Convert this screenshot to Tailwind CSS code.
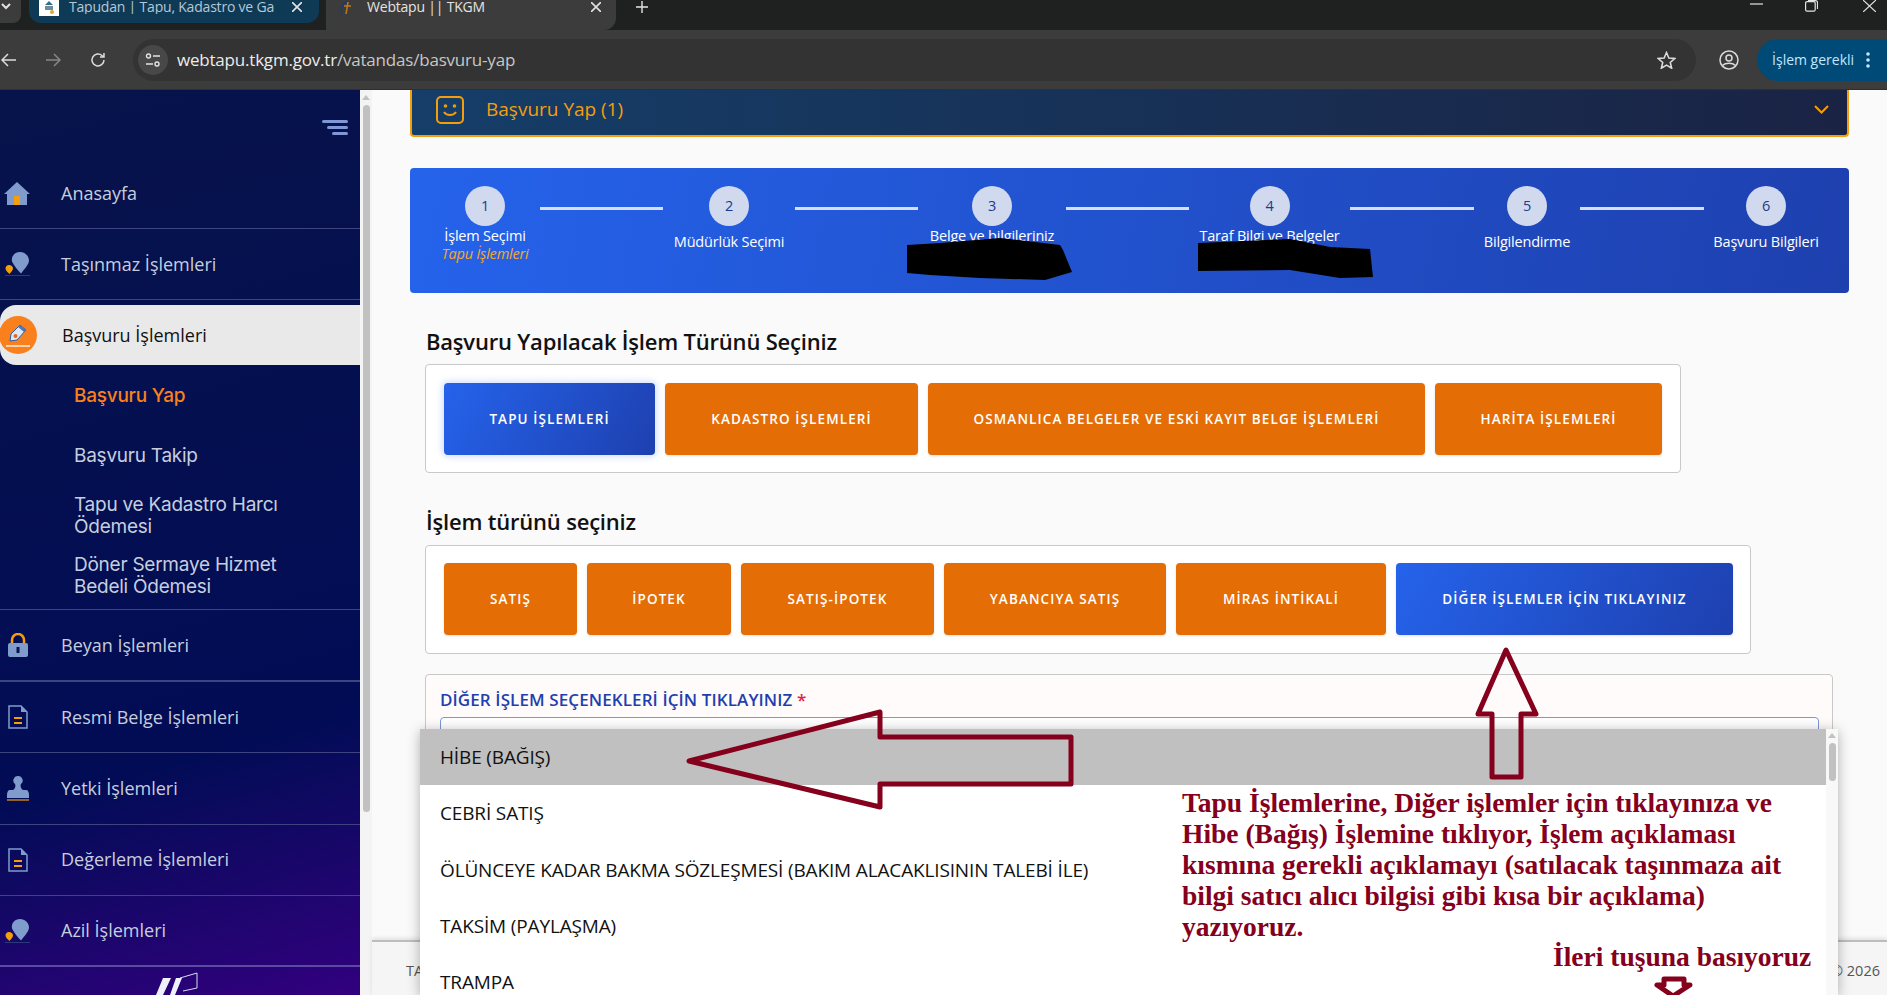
<!DOCTYPE html>
<html lang="tr">
<head>
  <meta charset="UTF-8"/>
  <title>Webtapu || TKGM</title>
  <script src="https://cdn.jsdelivr.net/npm/@tailwindcss/browser@4"></script>
</head>
<body class="bg-[#fafafa] font-['Open_Sans',sans-serif]">
<div class="relative w-[1887px] h-[995px] overflow-hidden flex flex-col">

  <!-- browser tabs -->
  <div class="h-[30px] bg-[#1f2020] flex shrink-0 overflow-hidden text-[14px] tracking-[-0.2px] leading-[14px]">
    <div class="w-[21px] h-[23px] bg-[#3c3c3c] rounded-br-lg flex items-start pl-[1px] pt-[3px]">
      <svg width="10" height="8" viewBox="0 0 10 8" fill="none" stroke="#e3e3e3" stroke-width="2"><path d="M1 1l4 4 4-4"/></svg>
    </div>
    <div class="ml-2 w-[290px] h-[23px] bg-[#0f3a56] rounded-b-xl flex items-start text-[#b5c8d6]">
      <div class="ml-[10px] w-[20px] h-[16px] bg-white flex justify-center">
        <svg width="14" height="15" viewBox="0 0 14 15"><path d="M7 1l4 4H3z" fill="#2f6f8f"/><rect x="3" y="6" width="8" height="4" fill="#6b8e9f"/><circle cx="10" cy="12" r="2" fill="#e8a33c"/></svg>
      </div>
      <span class="ml-[10px] w-[210px] overflow-hidden whitespace-nowrap">Tapudan | Tapu, Kadastro ve Ga</span>
      <svg class="ml-[13px] mt-[2px]" width="10" height="10" viewBox="0 0 10 10" stroke="#e3e3e3" stroke-width="1.6"><path d="M0 0l10 10M10 0L0 10"/></svg>
    </div>
    <div class="ml-[7px] w-[290px] h-[30px] bg-[#3c3c3c] rounded-br-xl flex items-start text-[#e3e3e3]">
      <svg class="ml-[13px]" width="14" height="16" viewBox="0 0 14 16" fill="none"><path d="M3 15C1 10 3 3 9 1" stroke="#1e3a6e" stroke-width="1.5"/><path d="M7 14L9 2M5 6h7" stroke="#c27a1a" stroke-width="1.5"/></svg>
      <span class="ml-[14px] w-[114px] whitespace-nowrap">Webtapu || TKGM</span>
      <svg class="ml-[110px] mt-[2px]" width="10" height="10" viewBox="0 0 10 10" stroke="#e3e3e3" stroke-width="1.6"><path d="M0 0l10 10M10 0L0 10"/></svg>
    </div>
    <svg class="ml-[20px] mt-[1px]" width="12" height="12" viewBox="0 0 12 12" stroke="#e3e3e3" stroke-width="1.4"><path d="M6 0v12M0 6h12"/></svg>
    <div class="ml-auto flex items-start text-white">
      <svg class="mt-[3px]" width="13" height="2" viewBox="0 0 13 2" stroke="#e3e3e3" stroke-width="1.2"><path d="M0 1h13"/></svg>
      <svg class="ml-[42px]" width="13" height="12" viewBox="0 0 13 12" fill="none" stroke="#e3e3e3" stroke-width="1.2"><rect x="0.6" y="1.6" width="9.6" height="9.6" rx="1.5"/><path d="M3 0.6h7.5a2 2 0 0 1 2 2V9"/></svg>
      <svg class="ml-[45px] mr-[11px]" width="13" height="12" viewBox="0 0 13 12" stroke="#e3e3e3" stroke-width="1.2"><path d="M0 0l13 12M13 0L0 12"/></svg>
    </div>
  </div>

  <!-- browser toolbar -->
  <div class="h-[60px] bg-[#3c3c3c] flex items-center shrink-0 border-b border-[#2a2f38]">
    <svg class="ml-[1px]" width="16" height="14" viewBox="0 0 16 14" fill="none" stroke="#dcdcdc" stroke-width="1.5"><path d="M15 7H1M7 1L1 7l6 6"/></svg>
    <svg class="ml-[29px]" width="16" height="14" viewBox="0 0 16 14" fill="none" stroke="#868686" stroke-width="1.5"><path d="M0 7h14M8 1l6 6-6 6"/></svg>
    <svg class="ml-[28px]" width="16" height="16" viewBox="0 0 16 16" fill="none" stroke="#dcdcdc" stroke-width="1.5"><path d="M14 8a6 6 0 1 1-2-4.5L14 5M14 1v4h-4"/></svg>
    <div class="ml-[27px] w-[1564px] h-[42px] bg-[#333333] rounded-full flex items-center">
      <div class="ml-[5px] w-[30px] h-[30px] rounded-full bg-[#484848] flex items-center justify-center">
        <svg width="16" height="14" viewBox="0 0 16 14" fill="none" stroke="#e3e3e3" stroke-width="1.4"><circle cx="3.5" cy="3" r="2"/><path d="M8 3h7M1 11h7"/><circle cx="12" cy="11" r="2"/></svg>
      </div>
      <div class="ml-[9px] mt-[1px] text-[17px] tracking-[-0.2px] text-[#c7c7c7] whitespace-nowrap"><span class="text-[#ececec]">webtapu.tkgm.gov.tr</span>/vatandas/basvuru-yap</div>
      <svg class="ml-auto mr-[20px]" width="19" height="18" viewBox="0 0 24 23" fill="none" stroke="#dcdcdc" stroke-width="2"><path d="M12 2l3 7 7.500 .6-5.700 5 1.800 7.400L12 18l-6.600 4 1.800-7.400-5.700-5L9 9z"/></svg>
    </div>
    <svg class="ml-[23px]" width="20" height="20" viewBox="0 0 20 20" fill="none" stroke="#dcdcdc" stroke-width="1.500"><circle cx="10" cy="10" r="9"/><circle cx="10" cy="8" r="3"/><path d="M3.500 15.500c3-3 10-3 13 0"/></svg>
    <div class="ml-[18px] w-[130px] h-[42px] bg-[#004a77] rounded-l-full rounded-r-[20px] flex items-center pl-[15px] text-[14px] text-[#c2e7ff] whitespace-nowrap">
      İşlem gerekli
      <svg class="ml-[12px]" width="4" height="16" viewBox="0 0 4 16" fill="#c2e7ff"><circle cx="2" cy="2" r="1.800"/><circle cx="2" cy="8" r="1.800"/><circle cx="2" cy="14" r="1.800"/></svg>
    </div>
  </div>

  <div class="flex flex-1 min-h-0">
    <!-- sidebar -->
    <aside class="relative w-[360px] shrink-0 bg-[linear-gradient(165deg,#07134a_0%,#020c56_72%,#32007f_100%)] text-[18px] font-medium text-[#c6cede] overflow-hidden">
      <div class="h-[68px] flex flex-col items-end gap-[3px] pr-[12px] pt-[30px]">
        <div class="w-[26px] h-[3px] bg-[#7f97d6] rounded"></div>
        <div class="w-[21px] h-[3px] bg-[#7f97d6] rounded"></div>
        <div class="w-[16px] h-[3px] bg-[#7f97d6] rounded"></div>
      </div>

      <div class="h-[71.3px] flex items-center border-b border-[#3d4480]">
        <svg class="ml-[4px] w-[26px]" height="23" viewBox="0 0 26 23"><path d="M13 0L26 12h-3v11H3V12H0z" fill="#7f9ccd"/><rect x="10" y="14" width="6" height="9" fill="#f59e0b"/></svg>
        <span class="ml-[31px]">Anasayfa</span>
      </div>
      <div class="h-[71.2px] flex items-center border-b border-[#3d4480]">
        <svg class="ml-[5px] w-[25px]" height="24" viewBox="0 0 25 24"><path d="M15 0c5 0 9 4 9 8.500 0 4-5 9-8 13-3-3-7-8-9-12C6 4 10 0 15 0z" fill="#7f9ccd"/><path d="M4 13c2 0 4 1.500 4 3.500 0 2-2.500 4-3.500 5.500C3 20.500 0.500 18.500 0.500 16.500 0.500 14.500 2 13 4 13z" fill="#f59e0b"/><path d="M0 23.500h25" stroke="#2b3a78"/></svg>
        <span class="ml-[31px]">Taşınmaz İşlemleri</span>
      </div>
      <div class="mt-[5px] h-[60px] bg-[#e9e9e9] rounded-l-2xl flex items-center text-[#101010]">
        <div class="-ml-[1px] w-[38px] h-[38px] rounded-full bg-[#f9801c] flex items-center justify-center">
          <svg width="26" height="26" viewBox="0 0 26 26" fill="none"><path d="M15 3l6 5-9 10-7 1 1-7z" fill="#dfe7f7" stroke="#2f5fa8"/><circle cx="10.500" cy="14" r="2" fill="#e8641b"/><path d="M15 3l6 5-2 2-6-5z" fill="#4d78b8"/><path d="M1 24h24" stroke="#fff" stroke-width="1.300"/></svg>
        </div>
        <span class="ml-[25px]">Başvuru İşlemleri</span>
      </div>
      <nav class="h-[245px] pt-[1px] pl-[74px] pr-[60px] font-['Inter',sans-serif] text-[19px] leading-[22px] tracking-[-0.25px] font-normal text-[#c6cede] border-b border-[#3d4480]">
        <div class="h-[60px] flex items-center text-[#f9801c] font-medium">Başvuru Yap</div>
        <div class="h-[60px] flex items-center">Başvuru Takip</div>
        <div class="h-[60px] flex items-center">Tapu ve Kadastro Harcı Ödemesi</div>
        <div class="h-[60px] flex items-center">Döner Sermaye Hizmet Bedeli Ödemesi</div>
      </nav>
      <div class="h-[71.5px] flex items-center border-b-2 border-[#3d4480]">
        <svg class="ml-[8px] w-[20px]" height="24" viewBox="0 0 20 24" fill="none"><path d="M4 11V7a6 6 0 0 1 12 0v4" stroke="#f59e0b" stroke-width="2.500"/><rect y="10" width="20" height="14" rx="2" fill="#7f9ccd"/><rect x="8.500" y="14" width="3" height="6" fill="#0b1450"/></svg>
        <span class="ml-[33px]">Beyan İşlemleri</span>
      </div>
      <div class="h-[71.3px] flex items-center border-b border-[#3d4480]">
        <svg class="ml-[8px] w-[20px]" height="24" viewBox="0 0 20 24" fill="none"><path d="M1 1h12l6 6v16H1z" stroke="#7f9ccd" stroke-width="1.500"/><path d="M13 1v6h6" fill="#7f9ccd"/><path d="M6 13h8M6 18h8" stroke="#f59e0b" stroke-width="2"/></svg>
        <span class="ml-[33px]">Resmi Belge İşlemleri</span>
      </div>
      <div class="h-[71.3px] flex items-center border-b border-[#3d4480]">
        <svg class="ml-[7px] w-[22px]" height="25" viewBox="0 0 22 25"><path d="M11 0a4.500 4.500 0 0 1 3 8c-1 2 0 5 2 6h3c2 0 3 2 3 5v3H0v-3c0-3 1-5 3-5h3c2-1 3-4 2-6a4.500 4.500 0 0 1 3-8z" fill="#7f9ccd"/><path d="M0 24h22" stroke="#f59e0b" stroke-width="1.200"/></svg>
        <span class="ml-[32px]">Yetki İşlemleri</span>
      </div>
      <div class="h-[71.3px] flex items-center border-b border-[#3d4480]">
        <svg class="ml-[8px] w-[20px]" height="24" viewBox="0 0 20 24" fill="none"><path d="M1 1h12l6 6v16H1z" stroke="#7f9ccd" stroke-width="1.500"/><path d="M13 1v6h6" fill="#7f9ccd"/><path d="M6 13h8M6 18h8" stroke="#f59e0b" stroke-width="2"/></svg>
        <span class="ml-[33px]">Değerleme İşlemleri</span>
      </div>
      <div class="h-[71.5px] flex items-center border-b-2 border-[#5a4aa0]">
        <svg class="ml-[5px] w-[25px]" height="24" viewBox="0 0 25 24"><path d="M15 0c5 0 9 4 9 8.500 0 4-5 9-8 13-3-3-7-8-9-12C6 4 10 0 15 0z" fill="#7f9ccd"/><path d="M4 13c2 0 4 1.500 4 3.500 0 2-2.500 4-3.500 5.500C3 20.500 0.500 18.500 0.500 16.500 0.500 14.500 2 13 4 13z" fill="#f59e0b"/><path d="M0 23.500h25" stroke="#2b3a78"/></svg>
        <span class="ml-[31px]">Azil İşlemleri</span>
      </div>
      <svg class="ml-[150px] mt-[5px]" width="48" height="23" viewBox="0 0 48 23" fill="none"><path d="M6 23L13 6h8L13 23zM20 23L26 6h6L25 23z" fill="#eef0fb"/><path d="M30 6l17-5v15l-14 3" stroke="#d9dcf2" stroke-width="1"/></svg>
    </aside>

    <!-- page scrollbar -->
    <div class="w-[12px] shrink-0 bg-[#f4f4f4] flex flex-col items-center pt-[5px]">
      <div class="w-0 h-0 border-x-[4px] border-x-transparent border-b-[5px] border-b-[#c1c1c1]"></div>
      <div class="mt-[5px] w-[7px] h-[707px] rounded-full bg-[#c1c1c1]"></div>
    </div>

    <!-- page -->
    <main class="relative flex-1 min-w-0 flex flex-col">
      <div class="flex-1 min-h-0 px-[38px] overflow-hidden">
        <div class="h-[47px] pb-[6px] border-x-2 border-b-2 border-[#f59e0b] rounded-b bg-[linear-gradient(90deg,#153e68,#1a2344)] flex items-center text-[#f59e0b]">
          <svg class="ml-[24px]" width="28" height="28" viewBox="0 0 28 28" fill="none" stroke="#f59e0b" stroke-width="2"><rect x="1" y="1" width="26" height="26" rx="4"/><circle cx="9.500" cy="10" r="0.800"/><circle cx="18.500" cy="10" r="0.800"/><path d="M8 16c2.500 4 9.500 4 12 0"/></svg>
          <span class="ml-[22px] text-[19px] font-medium">Başvuru Yap (1)</span>
          <svg class="ml-auto mr-[18px]" width="15" height="9" viewBox="0 0 15 9" fill="none" stroke="#f59e0b" stroke-width="2"><path d="M1 1l6.500 6.500L14 1"/></svg>
        </div>

        <!-- steps -->
        <div class="mt-[31px] h-[125px] rounded bg-[linear-gradient(100deg,#2563eb,#1e40af)] flex pl-[20px] pt-[18px] text-[14.5px] leading-[18px] tracking-[-0.2px] text-white">
          <div class="w-[110px] flex flex-col items-center">
            <div class="w-[40px] h-[40px] rounded-full bg-[#d0d9ee] text-[#1e3a8a] flex items-center justify-center">1</div>
            <div class="mt-[1px]">İşlem Seçimi</div>
            <div class="italic text-[#f9a826]">Tapu İşlemleri</div>
          </div>
          <div class="w-[123px] h-[3px] mt-[21px] bg-[#d6def2]"></div>
          <div class="w-[132px] flex flex-col items-center">
            <div class="w-[40px] h-[40px] rounded-full bg-[#d0d9ee] text-[#1e3a8a] flex items-center justify-center">2</div>
            <div class="mt-[7px]">Müdürlük Seçimi</div>
          </div>
          <div class="w-[123px] h-[3px] mt-[21px] bg-[#d6def2]"></div>
          <div class="w-[148px] flex flex-col items-center">
            <div class="w-[40px] h-[40px] rounded-full bg-[#d0d9ee] text-[#1e3a8a] flex items-center justify-center">3</div>
            <div class="mt-[1px]">Belge ve bilgileriniz</div>
          </div>
          <div class="w-[123px] h-[3px] mt-[21px] bg-[#d6def2]"></div>
          <div class="w-[161px] flex flex-col items-center">
            <div class="w-[40px] h-[40px] rounded-full bg-[#d0d9ee] text-[#1e3a8a] flex items-center justify-center">4</div>
            <div class="mt-[1px]">Taraf Bilgi ve Belgeler</div>
          </div>
          <div class="w-[124px] h-[3px] mt-[21px] bg-[#d6def2]"></div>
          <div class="w-[106px] flex flex-col items-center">
            <div class="w-[40px] h-[40px] rounded-full bg-[#d0d9ee] text-[#1e3a8a] flex items-center justify-center">5</div>
            <div class="mt-[7px]">Bilgilendirme</div>
          </div>
          <div class="w-[124px] h-[3px] mt-[21px] bg-[#d6def2]"></div>
          <div class="w-[124px] flex flex-col items-center">
            <div class="w-[40px] h-[40px] rounded-full bg-[#d0d9ee] text-[#1e3a8a] flex items-center justify-center">6</div>
            <div class="mt-[7px]">Başvuru Bilgileri</div>
          </div>
        </div>

        <h2 class="mt-[33px] ml-[16px] h-[30px] leading-[30px] text-[22px] tracking-[-0.2px] font-semibold text-[#111]">Başvuru Yapılacak İşlem Türünü Seçiniz</h2>
        <div class="mt-[8px] ml-[15px] w-[1256px] h-[109px] bg-white border border-[#c9c9c9] rounded flex gap-[10px] pl-[18px] pt-[18px] text-[13.5px] font-semibold tracking-[1.1px] text-white">
          <div class="w-[211px] h-[72px] rounded bg-[linear-gradient(120deg,#2563eb,#1e40af)] shadow-[0_0_6px_2px_rgba(37,99,235,0.2)] flex items-center justify-center">TAPU İŞLEMLERİ</div>
          <div class="w-[253px] h-[72px] rounded bg-[#e56d05] shadow flex items-center justify-center">KADASTRO İŞLEMLERİ</div>
          <div class="w-[497px] h-[72px] rounded bg-[#e56d05] shadow flex items-center justify-center">OSMANLICA BELGELER VE ESKİ KAYIT BELGE İŞLEMLERİ</div>
          <div class="w-[227px] h-[72px] rounded bg-[#e56d05] shadow flex items-center justify-center">HARİTA İŞLEMLERİ</div>
        </div>

        <h2 class="mt-[33px] ml-[16px] h-[30px] leading-[30px] text-[22px] tracking-[-0.2px] font-semibold text-[#111]">İşlem türünü seçiniz</h2>
        <div class="mt-[9px] ml-[15px] w-[1326px] h-[109px] bg-white border border-[#c9c9c9] rounded flex gap-[10px] pl-[18px] pt-[17px] text-[13.5px] font-semibold tracking-[1.1px] text-white">
          <div class="w-[133px] h-[72px] rounded bg-[#e56d05] shadow flex items-center justify-center">SATIŞ</div>
          <div class="w-[144px] h-[72px] rounded bg-[#e56d05] shadow flex items-center justify-center">İPOTEK</div>
          <div class="w-[193px] h-[72px] rounded bg-[#e56d05] shadow flex items-center justify-center">SATIŞ-İPOTEK</div>
          <div class="w-[222px] h-[72px] rounded bg-[#e56d05] shadow flex items-center justify-center">YABANCIYA SATIŞ</div>
          <div class="w-[210px] h-[72px] rounded bg-[#e56d05] shadow flex items-center justify-center">MİRAS İNTİKALİ</div>
          <div class="w-[337px] h-[72px] rounded bg-[linear-gradient(120deg,#2563eb,#1e40af)] shadow flex items-center justify-center">DİĞER İŞLEMLER İÇİN TIKLAYINIZ</div>
        </div>

        <div class="mt-[20px] ml-[15px] w-[1408px] h-[300px] bg-[#fffbfa] border border-[#c9c9c9] rounded pl-[14px] pr-[13px] pt-[14px]">
          <div class="h-[22px] leading-[22px] text-[17px] font-semibold tracking-[0.1px] text-[#1e40af]">DİĞER İŞLEM SEÇENEKLERİ İÇİN TIKLAYINIZ <span class="text-[#e11d48]">*</span></div>
          <div class="mt-[6px] h-[50px] bg-white border border-[#7f97d6] rounded"></div>
        </div>
      </div>

      <footer class="h-[55px] shrink-0 pt-[5px] bg-[#f5f5f5] border-t-2 border-[#bdbdbd] shadow-[0_-2px_4px_rgba(0,0,0,0.1)] flex items-center justify-between pl-[34px] pr-[7px] text-[14.5px] text-[#555]">
        <span>TA</span><span>© 2026</span>
      </footer>

      <!-- open select dropdown -->
      <div class="absolute left-[48px] top-[639px] w-[1418px] bottom-0 bg-white shadow-[0_2px_12px_rgba(0,0,0,0.3)] flex">
        <ul class="flex-1 text-[19px] tracking-[-0.15px] text-[#111]">
          <li class="h-[56px] bg-[#c0c0c0] flex items-center pl-[20px]">HİBE (BAĞIŞ)</li>
          <li class="h-[56.500px] flex items-center pl-[20px]">CEBRİ SATIŞ</li>
          <li class="h-[56.500px] flex items-center pl-[20px]">ÖLÜNCEYE KADAR BAKMA SÖZLEŞMESİ (BAKIM ALACAKLISININ TALEBİ İLE)</li>
          <li class="h-[56px] flex items-center pl-[20px]">TAKSİM (PAYLAŞMA)</li>
          <li class="h-[56px] flex items-center pl-[20px]">TRAMPA</li>
        </ul>
        <div class="w-[12px] bg-[#f8f8f8] flex flex-col items-center pt-[4px]">
          <div class="w-0 h-0 border-x-[4px] border-x-transparent border-b-[5px] border-b-[#c1c1c1]"></div>
          <div class="mt-[5px] w-[7px] h-[38px] rounded-full bg-[#c1c1c1]"></div>
        </div>
      </div>
    </main>
  </div>

  <!-- annotations drawn over the screenshot -->
  <svg class="absolute inset-0 pointer-events-none" width="1887" height="995" viewBox="0 0 1887 995" fill="none">
    <polygon points="907,245 940,243 1000,238 1060,245 1063,250 1072,272 1045,280 980,278 930,275 907,273" fill="#000"/>
    <polygon points="1198,243 1290,239 1330,247 1370,249 1373,277 1340,278 1290,270 1198,271" fill="#000"/>
    <polygon points="689,761 880,712 880,737 1071,737 1071,784 880,784 880,807" stroke="#85001c" stroke-width="5" stroke-linejoin="round"/>
    <polygon points="1506,650 1536,714 1521,714 1521,777 1492,777 1492,714 1478,714" stroke="#85001c" stroke-width="5" stroke-linejoin="round"/>
    <polygon points="1664,979 1684,979 1684,985 1690,985 1673,996 1657,985 1664,985" fill="#fff" stroke="#85001c" stroke-width="5" stroke-linejoin="round"/>
  </svg>
  <div class="absolute left-[1182px] top-[787px] w-[612px] font-['Liberation_Serif',serif] font-bold text-[27.5px] leading-[31px] text-[#85001c]">Tapu İşlemlerine, Diğer işlemler için tıklayınıza ve Hibe (Bağış) İşlemine tıklıyor, İşlem açıklaması kısmına gerekli açıklamayı (satılacak taşınmaza ait bilgi satıcı alıcı bilgisi gibi kısa bir açıklama) yazıyoruz.</div>
  <div class="absolute left-[1553px] top-[941px] font-['Liberation_Serif',serif] font-bold text-[27.5px] leading-[31px] text-[#85001c] whitespace-nowrap">İleri tuşuna basıyoruz</div>
</div>
</body>
</html>
